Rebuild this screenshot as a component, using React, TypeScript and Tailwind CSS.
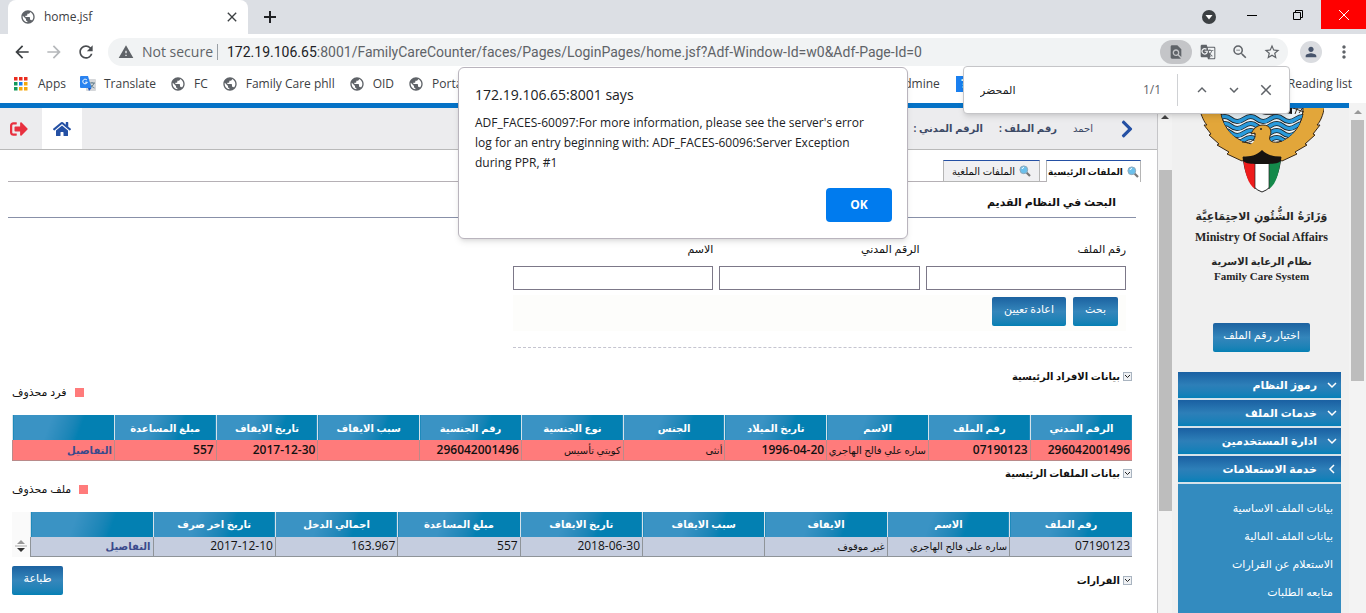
import type { ReactNode } from "react";
import { FaChevronRight, FaHome, FaSignOutAlt } from "react-icons/fa";
import {
  MdArrowBack,
  MdArrowForward,
  MdClose,
  MdExpandLess,
  MdExpandMore,
  MdFindInPage,
  MdGTranslate,
  MdMoreVert,
  MdOutlineZoomOut,
  MdPerson,
  MdPublic,
  MdRefresh,
  MdStarBorder,
  MdWarning,
} from "react-icons/md";

// Main members table
const memberColumns = [
  "الرقم المدني",
  "رقم الملف",
  "الاسم",
  "تاريخ الميلاد",
  "الجنس",
  "نوع الجنسية",
  "رقم الجنسية",
  "سبب الايقاف",
  "تاريخ الايقاف",
  "مبلغ المساعدة",
  "",
];

const memberRow = [
  "296042001496",
  "07190123",
  "ساره علي فالح الهاجري",
  "1996-04-20",
  "أنثى",
  "كويتي تأسيس",
  "296042001496",
  "",
  "2017-12-30",
  "557",
];

// Main files table
const fileColumns = [
  "رقم الملف",
  "الاسم",
  "الايقاف",
  "سبب الايقاف",
  "تاريخ الايقاف",
  "مبلغ المساعدة",
  "اجمالي الدخل",
  "تاريخ اخر صرف",
  "",
];

const fileRow = [
  "07190123",
  "ساره علي فالح الهاجري",
  "غير موقوف",
  "",
  "2018-06-30",
  "557",
  "163.967",
  "2017-12-10",
];

const searchFields = [
  { id: "file-no", label: "رقم الملف" },
  { id: "civil-no", label: "الرقم المدني" },
  { id: "name", label: "الاسم" },
];

const menu = ["رموز النظام", "خدمات الملف", "ادارة المستخدمين", "خدمة الاستعلامات"];

const subMenu = [
  "بيانات الملف الاساسية",
  "بيانات الملف المالية",
  "الاستعلام عن القرارات",
  "متابعه الطلبات",
];

function TabStrip() {
  return (
    <div className="flex h-[34px] items-start bg-[#dcdfe4]">
      <div className="ml-2 flex h-[34px] w-60 items-center rounded-t-lg bg-white pl-3 pr-2">
        <MdPublic className="size-4 text-[#5f6368]" />
        <span className="ml-2 flex-1 text-xs text-[#3c4043]">home.jsf</span>
        <button aria-label="Close tab">
          <MdClose className="size-4 text-[#3c4043]" />
        </button>
      </div>
      <button aria-label="New tab" className="ml-3 flex h-[34px] items-center">
        <svg viewBox="0 0 20 20" className="size-5 stroke-[#202124]" strokeWidth="2">
          <path d="M10 4v12M4 10h12" />
        </svg>
      </button>
      <div className="ml-auto flex">
        <button aria-label="Search tabs" className="flex h-[34px] w-6 items-center justify-center">
          <svg viewBox="0 0 14 14" className="size-[14px]">
            <circle cx="7" cy="7" r="7" fill="#3c4043" />
            <path d="M3.5 5h7L7 9.5z" fill="#fff" />
          </svg>
        </button>
        <button aria-label="Minimize" className="ml-2 flex h-[29px] w-[46px] items-center justify-center">
          <svg viewBox="0 0 10 10" className="size-[10px] stroke-black">
            <path d="M0 5.500h10" />
          </svg>
        </button>
        <button aria-label="Restore" className="flex h-[29px] w-[46px] items-center justify-center">
          <svg viewBox="0 0 10 10" className="size-[10px] fill-none stroke-black">
            <path d="M.5 2.500h7v7h-7zM2.500 2.500v-2h7v7h-2" />
          </svg>
        </button>
        <button aria-label="Close" className="flex h-[29px] w-[45px] items-center justify-center bg-[#ff0000]">
          <svg viewBox="0 0 10 10" className="size-[10px] stroke-white">
            <path d="M0 0l10 10M10 0L0 10" />
          </svg>
        </button>
      </div>
    </div>
  );
}

function AddressBar() {
  return (
    <div className="flex h-9 items-center bg-white pl-3 text-[#5f6368]">
      <button aria-label="Back">
        <MdArrowBack className="size-5 text-[#3c4043]" />
      </button>
      <button aria-label="Forward" className="ml-3">
        <MdArrowForward className="size-5 text-[#b5b8bb]" />
      </button>
      <button aria-label="Reload" className="ml-3">
        <MdRefresh className="size-5 text-[#4a4d51]" />
      </button>
      <div className="ml-3 flex h-7 flex-1 items-center rounded-full bg-[#f1f3f4] pl-[10px] text-sm">
        <MdWarning className="size-4" />
        <span className="ml-2">Not secure</span>
        <span className="ml-1 h-4 w-px bg-[#9aa0a6]" />
        <label htmlFor="url" className="ml-[9px] font-['Roboto',sans-serif] text-[#202124]">
          172.19.106.65
        </label>
        <input
          id="url"
          className="min-w-0 flex-1 bg-transparent font-['Roboto',sans-serif] outline-none"
          defaultValue=":8001/FamilyCareCounter/faces/Pages/LoginPages/home.jsf?Adf-Window-Id=w0&Adf-Page-Id=0"
        />
        <button aria-label="Find" className="flex h-6 w-8 items-center justify-center rounded-full bg-[#c4c5c8]">
          <MdFindInPage className="size-4" />
        </button>
        <button aria-label="Translate" className="flex w-8 justify-center">
          <MdGTranslate className="size-4" />
        </button>
        <button aria-label="Zoom" className="flex w-8 justify-center">
          <MdOutlineZoomOut className="size-[18px]" />
        </button>
        <button aria-label="Bookmark" className="flex w-8 justify-center">
          <MdStarBorder className="size-[18px]" />
        </button>
      </div>
      <button aria-label="Profile" className="ml-3 flex size-[22px] items-center justify-center rounded-full bg-[#dadce0]">
        <MdPerson className="size-4 text-[#47546b]" />
      </button>
      <button aria-label="Menu" className="ml-3 mr-3">
        <MdMoreVert className="size-5" />
      </button>
    </div>
  );
}

function Bookmark({ label }: { label: string }) {
  return (
    <a href="#" className="flex items-center gap-2">
      <MdPublic className="size-4 text-[#5f6368]" />
      {label}
    </a>
  );
}

const appDots = [
  "fill-[#ea2c1f]", "fill-[#ea2c1f]", "fill-[#ea2c1f]",
  "fill-[#12985a]", "fill-[#1a80f0]", "fill-[#f5a80c]",
  "fill-[#12985a]", "fill-[#f5a80c]", "fill-[#f5a80c]",
];

function Bookmarks() {
  return (
    <div className="flex h-[33px] items-center justify-between bg-white pb-[5px] pl-[14px] pr-[14px] text-xs text-[#3c4043]">
      <div className="flex items-center gap-[14px]">
        <a href="#" className="flex items-center gap-[10px]">
          <svg viewBox="0 0 14 14" className="size-[14px]">
            {appDots.map((fill, i) => (
              <rect key={i} x={(i % 3) * 5} y={Math.floor(i / 3) * 5} width="3.500" height="3.500" className={fill} />
            ))}
          </svg>
          Apps
        </a>
        <a href="#" className="flex items-center gap-2">
          <svg viewBox="0 0 16 16" className="size-4">
            <rect x="6" y="3" width="10" height="12" rx="1" fill="#d5d7da" />
            <path d="M9 7h6M12 6v1M14 7c-1 3-3 4-4 5M10.500 8.500c1 2 3 3 4 3.500" stroke="#607d8b" fill="none" />
            <path d="M1 0h7l3.500 12H1a1 1 0 01-1-1V1a1 1 0 011-1z" fill="#2a83f0" />
            <path d="M8 12h3.500L9 15z" fill="#1a56c0" />
            <path d="M7 4.200A2.300 2.300 0 107.300 6.200H5.200" stroke="#fff" fill="none" />
          </svg>
          Translate
        </a>
        <Bookmark label="FC" />
        <Bookmark label="Family Care phll" />
        <Bookmark label="OID" />
        <Bookmark label="Portal" />
      </div>
      <div className="flex items-center">
        <a href="#">Admine</a>
        <span className="ml-4 flex size-4 items-center justify-center bg-[#1a80f0] font-bold text-white">?</span>
        <a href="#" className="ml-[316px]">
          Reading list
        </a>
      </div>
    </div>
  );
}

function BlueButton({ children, className }: { children: ReactNode; className: string }) {
  return (
    <button
      className={`h-[29px] rounded-xs bg-linear-to-b from-[#1c62a0] via-[#3486bb] to-[#0380b4] pb-1 text-[11px] font-normal whitespace-nowrap text-white ${className}`}
    >
      {children}
    </button>
  );
}

function SectionTitle({ children }: { children: ReactNode }) {
  return (
    <h2 className="flex h-4 items-center gap-[3px] text-[10px] font-bold">
      <button aria-label="Toggle section" className="flex size-[9px] items-center justify-center border border-[#a9b4c0] bg-[#eef0f3]">
        <svg viewBox="0 0 7 7" className="size-[7px] fill-none stroke-[#222]">
          <path d="M1 2l2.500 2.500L6 2" />
        </svg>
      </button>
      {children}
    </h2>
  );
}

function Legend({ children }: { children: ReactNode }) {
  return (
    <div className="flex h-4 items-center justify-end gap-2 text-[11px]">
      <span className="size-[9px] bg-[#ff7b7b]" />
      {children}
    </div>
  );
}

function DataTable({ columns, row, deleted }: { columns: string[]; row: string[]; deleted?: boolean }) {
  const cell = deleted ? "border-[#b98a8a] bg-[#ff7b7b]" : "border-[#8f9499] bg-[#c5cddf]";
  return (
    <table className="w-full table-fixed border-collapse">
      <thead>
        <tr>
          {columns.map((name, i) => (
            <th
              key={i}
              className="h-[25px] border-l border-[#d5e2ea] bg-linear-110 from-[#3a93c4] from-35% to-[#0380b2] to-65% text-[10px] leading-4 text-white"
            >
              {name}
            </th>
          ))}
        </tr>
      </thead>
      <tbody>
        <tr>
          {row.map((value, i) => (
            <td
              key={i}
              className={`h-5 border-b border-l pr-[2px] text-right leading-4 whitespace-nowrap ${cell} ${/\d/.test(value) ? "text-xs" : "text-[10px]"} ${deleted && /\d/.test(value) ? "font-semibold" : ""}`}
            >
              {value}
            </td>
          ))}
          <td className={`h-5 border-b border-l pr-[2px] text-right text-[10px] leading-4 ${cell}`}>
            <a href="#" className="font-semibold text-[#3a4a8c]">
              التفاصيل
            </a>
          </td>
        </tr>
      </tbody>
    </table>
  );
}

function Magnifier() {
  return (
    <svg viewBox="0 0 12 12" className="size-3 shrink-0">
      <path d="M7.500 7.500l3.500 3.500" stroke="#777" strokeWidth="2.200" />
      <circle cx="4.800" cy="4.800" r="3.900" fill="#6bc0ec" stroke="#8fa9bb" />
      <path d="M3 4a2.200 2.200 0 012-1.500" stroke="#fff" fill="none" />
    </svg>
  );
}

function MainPane() {
  return (
    <main dir="rtl" className="min-w-0 flex-1 bg-white text-[11px] text-[#111]">
      <div className="flex h-[42px] items-center border-b border-[#b9b9b9] bg-[#ececee] pr-5 text-[10px] text-[#3c4a66]">
        <FaChevronRight className="size-5 text-[#2450a4]" />
        <span className="mr-6">احمد</span>
        <span className="mr-4 font-bold">رقم الملف :</span>
        <span className="mr-4 font-bold">الرقم المدني :</span>
        <div className="mr-auto flex h-full">
          <button aria-label="Home" className="flex w-10 items-center justify-center bg-white">
            <FaHome className="size-[18px] text-[#2450a4]" />
          </button>
          <button aria-label="Sign out" className="flex w-[42px] items-center justify-end pl-[10px]">
            <FaSignOutAlt className="size-[18px] text-[#e8303f]" />
          </button>
        </div>
      </div>

      {/* Page tabs */}
      <div className="ml-2 mr-4 flex items-end pt-[10px]">
        <button className="flex h-[22px] w-[95px] items-center justify-center gap-1 border border-b-0 border-[#b5b5b5] border-t-[#2450a4] text-[9px] font-bold whitespace-nowrap">
          <Magnifier />
          الملفات الرئيسية
        </button>
        <span className="w-[6px] self-stretch border-b border-[#b5b0b5]" />
        <button className="flex h-[22px] w-[97px] items-center justify-center gap-1 border border-[#b5b5b5] border-t-[#2450a4] bg-[#f0f0f2] text-[10px] whitespace-nowrap">
          <Magnifier />
          الملفات الملغية
        </button>
        <span className="flex-1 border-b border-[#b5b0b5]" />
      </div>

      <h1 className="mr-[21px] ml-2 h-9 border-b border-[#8890a8] pr-5 pt-3 text-[11px] leading-4 font-bold">
        البحث في النظام القديم
      </h1>

      {/* Search form */}
      <form className="mr-[25px] ml-[513px]">
        <div className="mr-[6px]">
          <div className="flex gap-[6px] pt-[23px]">
            {searchFields.map((field) => (
              <div key={field.id} className="flex-1">
                <label htmlFor={field.id} className="block h-[25px] leading-4">
                  {field.label}
                </label>
                <input id={field.id} className="block h-6 w-full border border-[#7c7888] bg-white px-1" />
              </div>
            ))}
          </div>
          <div className="mt-[5px] flex h-9 items-start gap-[7px] bg-[#fdfdfb] pt-[2px] pr-2">
            <BlueButton className="w-[45px]">بحث</BlueButton>
            <BlueButton className="w-[74px]">اعادة تعيين</BlueButton>
          </div>
        </div>
        <div className="h-[17px] border-b border-dashed border-[#c5c5d0]" />
      </form>

      <div className="mr-[25px] ml-3">
        <div className="pt-5">
          <SectionTitle>بيانات الافراد الرئيسية</SectionTitle>
        </div>
        <Legend>فرد محذوف</Legend>
        <div className="mt-[15px]">
          <DataTable columns={memberColumns} row={memberRow} deleted />
        </div>

        <div className="mt-[5px]">
          <SectionTitle>بيانات الملفات الرئيسية</SectionTitle>
        </div>
        <Legend>ملف محذوف</Legend>
        <div className="mt-[14px] flex">
          <div className="flex-1">
            <DataTable columns={fileColumns} row={fileRow} />
          </div>
          <div className="flex w-[18px] flex-col items-center justify-end gap-px bg-[#fafafa] pb-1">
            <svg viewBox="0 0 12 14" className="h-[14px] w-3">
              <path d="M6 1l4 4H2z" fill="#999" />
              <path d="M0 7h12" stroke="#aaa" />
              <path d="M6 13l4-4H2z" fill="#333" />
            </svg>
          </div>
        </div>

        <div className="mt-[9px] flex items-center justify-between">
          <SectionTitle>القرارات</SectionTitle>
          <BlueButton className="w-[51px]">طباعة</BlueButton>
        </div>
      </div>
    </main>
  );
}

function Emblem() {
  return (
    <svg viewBox="0 0 124 86" className="h-[86px] w-[124px]">
      <path
        d="M-1 0C2 9 4 14 7 17L4 17L11 26L9 27L19 36L17 37L29 44L27 46L42 53L62 44L82 53L97 46L95 44L107 37L105 36L115 27L113 26L120 17L117 17C120 14 123 8 125 -3L94 -3L103 6C99 24 84 33 62 34C40 33 25 24 21 6L24 -3Z"
        fill="#e2a63a"
        stroke="#382818"
      />
      <path d="M21 0H103C103 20 88 37 62 37S21 20 21 0Z" fill="#eaf3f8" stroke="#222" />
      <clipPath id="sea">
        <path d="M21 0H103C103 20 88 37 62 37S21 20 21 0Z" />
      </clipPath>
      <g clipPath="url(#sea)" fill="none">
        <path d="M34 0H92V6C80 3 75 9 62 6S42 8 34 4Z" fill="#171717" />
        <path d="M18 11q7-5 13 0t13 0 13 0 13 0 13 0 13 0 13 0M18 18q7-5 13 0t13 0 13 0 13 0 13 0 13 0 13 0M18 25q7-5 13 0t13 0 13 0 13 0 13 0 13 0 13 0M18 32q7-5 13 0t13 0 13 0 13 0 13 0 13 0 13 0" stroke="#1b1b1b" strokeWidth="5" />
        <path d="M18 11q7-5 13 0t13 0 13 0 13 0 13 0 13 0 13 0M18 18q7-5 13 0t13 0 13 0 13 0 13 0 13 0 13 0M18 25q7-5 13 0t13 0 13 0 13 0 13 0 13 0 13 0M18 32q7-5 13 0t13 0 13 0 13 0 13 0 13 0 13 0" stroke="#2a9bdc" strokeWidth="3.400" />
      </g>
      <path d="M98 -2L95 6M104 -2L99 5M93 0L104 4" stroke="#382818" fill="none" />
      <path d="M48 38C55 35 56 30 55 25L51 26C53 21 57 17 63 17C71 17 72 24 70 28C68 33 73 36 82 34L84 46L62 50L38 44Z" fill="#e2a63a" />
      <path d="M42 34C52 36 56 31 55 25L51 26C53 21 57 17 63 17C71 17 72 24 70 28C68 33 72 36 82 33" fill="none" stroke="#382818" />
      <circle cx="61" cy="21" r="1" fill="#222" />
      <path d="M43 49C45 66 50 80 62 84C74 80 79 66 81 49Z" fill="#fff" stroke="#222" />
      <path d="M43 49L55 54V81C48 76 45 66 43 49Z" fill="#ee1c1c" />
      <path d="M81 49L69 54V81C76 76 79 66 81 49Z" fill="#14894a" />
      <path d="M55 54V81M69 54V81" stroke="#222" strokeWidth=".7" />
      <path d="M43 49C50 49 57 47 62 42C67 47 74 49 81 49V53C76 57 72 55 69 56H55C51 55 48 57 43 53Z" fill="#171310" />
    </svg>
  );
}

function Sidebar() {
  return (
    <aside className="flex w-[177px] flex-col bg-[#f0f0f0] pr-2 pl-[6px] text-[11px]">
      <div className="flex flex-col items-center pl-1 font-bold text-[#262626]">
        <Emblem />
        <p dir="rtl" className="mt-[11px] font-['DejaVu_Serif','DejaVu_Sans',serif] text-[11px] leading-6 whitespace-nowrap">
          وَزَارَةُ الشُّئُونِ الاجتِمَاعِيَّة
        </p>
        <p className="font-['Liberation_Serif',serif] text-xs leading-4">Ministry Of Social Affairs</p>
        <p dir="rtl" className="mt-2 text-[10px] leading-4">
          نظام الرعاية الاسرية
        </p>
        <p className="font-['Liberation_Serif',serif] text-[11px] leading-[14px]">Family Care System</p>
        <BlueButton className="mt-10 w-[97px]">اختيار رقم الملف</BlueButton>
      </div>
      <nav dir="rtl" className="mt-5 flex flex-1 flex-col bg-[#338bbf] text-white">
        {menu.map((item, i) => (
          <button
            key={item}
            className="flex h-7 shrink-0 items-center gap-[10px] border-b-2 border-[#d5e2ea] bg-linear-to-b from-[#1a60a2] via-[#2d7fb8] to-[#0380b8] pr-1 font-bold"
          >
            <svg viewBox="0 0 10 10" className="size-[10px] fill-none stroke-white" strokeWidth="1.500">
              <path d={i === menu.length - 1 ? "M7 1L3 5l4 4" : "M1 3l4 4 4-4"} />
            </svg>
            {item}
          </button>
        ))}
        <ul className="pt-[10px] pr-2">
          {subMenu.map((item) => (
            <li key={item} className="flex h-7 items-center">
              <a href="#">{item}</a>
            </li>
          ))}
        </ul>
      </nav>
    </aside>
  );
}

function Alert() {
  return (
    <div
      role="alertdialog"
      aria-labelledby="alert-title"
      className="absolute top-[67px] left-[458px] w-[450px] rounded-md border border-[#b9b4bd] bg-white p-4 pt-[15px] pr-[15px] text-[#202124] shadow-md"
    >
      <h2 id="alert-title" className="text-sm leading-6">
        172.19.106.65:8001 says
      </h2>
      <p className="mt-[6px] text-xs leading-5">
        ADF_FACES-60097:For more information, please see the server's error
        <br />
        log for an entry beginning with: ADF_FACES-60096:Server Exception
        <br />
        during PPR, #1
      </p>
      <div className="mt-[15px] flex justify-end">
        <button className="h-[34px] w-[66px] rounded-sm bg-[#007bee] text-xs font-bold text-white">OK</button>
      </div>
    </div>
  );
}

function FindBar() {
  return (
    <div className="absolute top-[66px] right-[76px] flex h-12 w-[327px] items-center rounded-sm border border-[#c5c5c8] bg-white px-4 text-xs text-[#5f6368] shadow-md">
      <input aria-label="Find in page" defaultValue="المحضر" className="min-w-0 flex-1 text-[11px] text-[#202124] outline-none" />
      <span>1/1</span>
      <span className="ml-4 mr-3 h-8 w-px bg-[#cfd1d4]" />
      <button aria-label="Previous" className="flex w-6 justify-center">
        <MdExpandLess className="size-[18px]" />
      </button>
      <button aria-label="Next" className="ml-2 flex w-6 justify-center">
        <MdExpandMore className="size-[18px]" />
      </button>
      <button aria-label="Close find bar" className="ml-2 -mr-[5px] flex w-6 justify-center">
        <MdClose className="size-[18px]" />
      </button>
    </div>
  );
}

export default function App() {
  return (
    <div className="relative flex h-screen flex-col overflow-hidden bg-white font-['Open_Sans','DejaVu_Sans',sans-serif]">
      <TabStrip />
      <AddressBar />
      <Bookmarks />
      <div className="flex min-h-0 flex-1">
        <div className="flex min-w-0 flex-1 flex-col">
          <div className="h-[5px] shrink-0 bg-[#0572c6]" />
          <div className="flex min-h-0 flex-1">
            <MainPane />
            <div className="flex w-[15px] flex-col items-end border-l border-[#c5c5c8] bg-[#f3f3f3]">
              <svg viewBox="0 0 14 10" className="mt-1 h-[10px] w-[14px]">
                <path d="M7 3l4 4H3z" fill="#444" />
              </svg>
              <div className="mt-12 h-[341px] w-[13px] bg-[#bdbdbd]" />
            </div>
            <Sidebar />
          </div>
        </div>
        <div className="flex w-[17px] flex-col items-center bg-[#f3f3f3]">
          <svg viewBox="0 0 14 10" className="mt-1 h-[10px] w-[14px]">
            <path d="M7 3l4 4H3z" fill="#999" />
          </svg>
          <div className="mt-[3px] h-[261px] w-[13px] bg-[#bdbdbd]" />
        </div>
      </div>
      <Alert />
      <FindBar />
    </div>
  );
}
